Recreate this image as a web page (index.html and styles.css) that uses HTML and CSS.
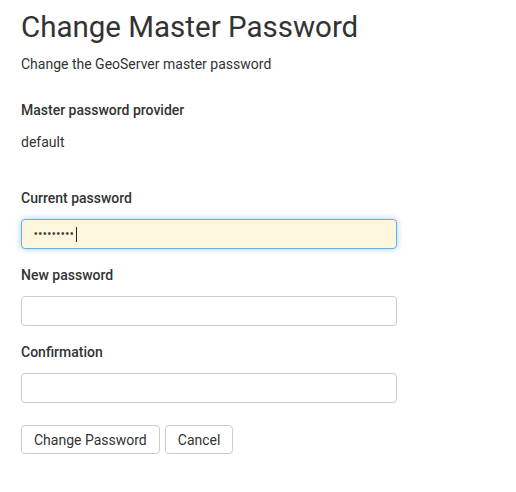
FILE: index.html
```html
<!DOCTYPE html>
<html>
<head>
<meta charset="utf-8">
<link rel="stylesheet" href="styles.css">
</head>
<body>
<div class="page">
  <h1 class="title">Change Master Password</h1>
  <p class="subtitle">Change the GeoServer master password</p>
  <div class="field">
    <div class="label label-first">Master password provider</div>
    <div class="value">default</div>
  </div>
  <div class="field">
    <label class="label label-gap">Current password</label>
    <div class="input input-focus"><span class="dots">•••••••••</span><span class="caret"></span></div>
  </div>
  <div class="field">
    <label class="label">New password</label>
    <div class="input"></div>
  </div>
  <div class="field">
    <label class="label">Confirmation</label>
    <div class="input"></div>
  </div>
  <div class="buttons">
    <button class="btn">Change Password</button>
    <button class="btn">Cancel</button>
  </div>
</div>
</body>
</html>
```
FILE: styles.css
```css
html, body {
  margin: 0;
  padding: 0;
  background: #fff;
}
body {
  font-family: Roboto, "Liberation Sans", sans-serif;
  color: #333;
  font-size: 14px;
}
.page {
  padding: 7px 0 0 21px;
  width: 376px;
}
.title {
  font-size: 29.5px;
  font-weight: 400;
  margin: 0;
  line-height: 40px;
  color: #333;
}
.subtitle {
  margin: 7px 0 0 0;
  line-height: 20px;
  font-size: 14px;
}
.field {
  display: flex;
  flex-direction: column;
}
.label {
  font-weight: 500;
  margin-top: 16px;
  line-height: 20px;
  display: block;
}
.label-first {
  margin-top: 26px;
}
.label-gap {
  margin-top: 36px;
}
.value {
  margin-top: 12px;
  line-height: 20px;
}
.input {
  margin-top: 11px;
  height: 30px;
  box-sizing: border-box;
  border: 1px solid #ccc;
  border-radius: 4px;
  background: #fff;
  display: flex;
  align-items: center;
  padding-left: 12px;
}
.input-focus {
  background: #fcf7dc;
  border-color: #66afe9;
  box-shadow: 0 0 6px rgba(102, 175, 233, 0.6);
}
.dots {
  font-family: "Liberation Sans", sans-serif;
  font-size: 10px;
  letter-spacing: 1px;
  color: #444;
  line-height: 14px;
}
.caret {
  display: inline-block;
  width: 1px;
  height: 15px;
  background: #222;
  margin-left: 1px;
}
.buttons {
  display: flex;
  gap: 5px;
  margin-top: 22px;
}
.btn {
  font-family: Roboto, "Liberation Sans", sans-serif;
  font-size: 14px;
  color: #333;
  background: #fff;
  border: 1px solid #ccc;
  border-radius: 4px;
  height: 29px;
  padding: 0 12px;
  line-height: 20px;
}
```
